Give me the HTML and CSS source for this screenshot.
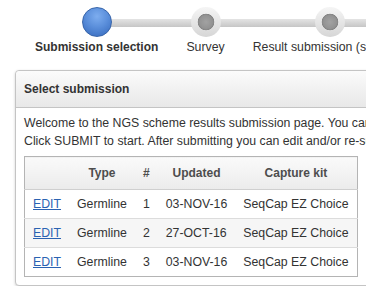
FILE: index.html
```html
<!DOCTYPE html>
<html lang="en">

<head>
    <meta charset="UTF-8">
    <meta name="viewport" content="width=device-width, initial-scale=1.0">
    <title>Select submission - NGS scheme</title>
    <link rel="stylesheet" href="styles.css">
</head>

<body>
    <!-- Progress steps -->
    <div class="steps">
        <div class="step step-active">
            <div class="step-dot"></div>
            <div class="step-label">Submission selection</div>
        </div>
        <div class="step">
            <div class="step-dot"></div>
            <div class="step-label">Survey</div>
        </div>
        <div class="step">
            <div class="step-dot"></div>
            <div class="step-label">Result submission (somatic)</div>
        </div>
    </div>

    <!-- Submission panel -->
    <div class="panel">
        <div class="panel-header">Select submission</div>
        <div class="panel-body">
            <p class="intro">
                Welcome to the NGS scheme results submission page. You can find your previous submissions below.<br>
                Click SUBMIT to start. After submitting you can edit and/or re-submit your results until the deadline.
            </p>
            <table class="submissions">
                <thead>
                    <tr>
                        <th></th>
                        <th>Type</th>
                        <th>#</th>
                        <th>Updated</th>
                        <th>Capture kit</th>
                    </tr>
                </thead>
                <tbody>
                    <tr>
                        <td><a href="#">EDIT</a></td>
                        <td>Germline</td>
                        <td>1</td>
                        <td>03-NOV-16</td>
                        <td>SeqCap EZ Choice</td>
                    </tr>
                    <tr>
                        <td><a href="#">EDIT</a></td>
                        <td>Germline</td>
                        <td>2</td>
                        <td>27-OCT-16</td>
                        <td>SeqCap EZ Choice</td>
                    </tr>
                    <tr>
                        <td><a href="#">EDIT</a></td>
                        <td>Germline</td>
                        <td>3</td>
                        <td>03-NOV-16</td>
                        <td>SeqCap EZ Choice</td>
                    </tr>
                </tbody>
            </table>
        </div>
    </div>
</body>

</html>
```

FILE: styles.css
```css
* {
    margin: 0;
    padding: 0;
    box-sizing: border-box;
    font-family: 'Liberation Sans', Arial, Helvetica, sans-serif;
}

body {
    background-color: white;
    color: #333;
    font-size: 12.3px;
    overflow: hidden;
}

/* Progress steps */
.steps {
    display: flex;
    padding: 7px 0 0 21px;
    white-space: nowrap;
}

.step {
    position: relative;
    display: flex;
    flex-direction: column;
    align-items: center;
    padding: 0 14px;
}

.step::before {
    content: '';
    position: absolute;
    top: 12px;
    left: 0;
    right: 0;
    height: 8px;
    background: linear-gradient(#e4e4e4, #c6c6c6);
}

.step:first-child::before {
    left: 50%;
}

.step-dot {
    position: relative;
    z-index: 1;
    width: 30px;
    height: 30px;
    border-radius: 50%;
    background:
        radial-gradient(circle, #a2a2a2 0, #939393 6.5px, #858585 8px, rgba(0, 0, 0, 0) 8.6px),
        linear-gradient(#f5f5f5, #d6d6d6);
}

.step-active .step-dot {
    border: 1px solid #3865aa;
    background: radial-gradient(circle at 50% 30%, #7dadef 0, #5b8fdb 45%, #3367bb 100%);
}

.step-label {
    margin-top: 2px;
    line-height: 16px;
}

.step-active .step-label {
    font-size: 12px;
    font-weight: bold;
}

/* Panel */
.panel {
    width: 660px;
    margin: 15px 0 0 15px;
    border: 1px solid #c4c4c4;
    border-radius: 4px;
    box-shadow: 0 1px 3px rgba(0, 0, 0, 0.18);
    background-color: white;
}

.panel-header {
    padding: 10px 8px;
    line-height: 16px;
    font-size: 12px;
    font-weight: bold;
    background: linear-gradient(#fbfbfb, #e8e8e8);
    border-bottom: 1px solid #c4c4c4;
    border-radius: 4px 4px 0 0;
}

.panel-body {
    padding: 6px 8px 8px;
}

.intro {
    line-height: 18px;
    white-space: nowrap;
}

/* Submissions table */
.submissions {
    margin-top: 6px;
    border-collapse: collapse;
    border: 1px solid #b4b4b4;
}

.submissions th {
    padding: 8px;
    line-height: 16px;
    font-size: 12px;
    color: #4d4d4d;
    text-align: center;
    background: linear-gradient(#fafafa, #ebebeb);
    border-bottom: 1px solid #cfcfcf;
}

.submissions td {
    padding: 6px 8px;
    line-height: 16px;
    border-top: 1px solid #dcdcdc;
    white-space: nowrap;
}

.submissions tbody tr:nth-child(even) td {
    background-color: #f6f6f6;
}

.submissions a {
    color: #2a62b2;
}
```
